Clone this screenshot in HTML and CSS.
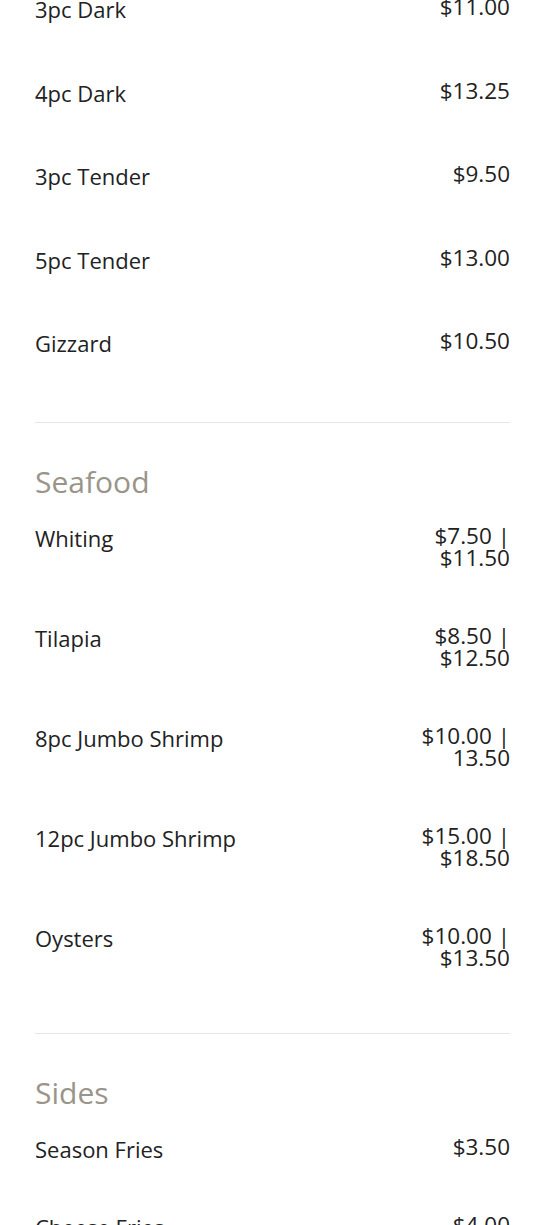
FILE: index.html
```html
<!DOCTYPE html>
<html lang="en">
    <head>
        <meta charset="UTF-8">
        <meta name="viewport" content="width=device-width, initial-scale=1.0">
        <title>Menu</title>
        <link rel="stylesheet" href="styles.css">
    </head>
    <body>
        <div class="menu">
            <section class="menu-section">
                <ul class="items">
                    <li class="item"><span class="name">3pc Dark</span><span class="price">$11.00</span></li>
                    <li class="item"><span class="name">4pc Dark</span><span class="price">$13.25</span></li>
                    <li class="item"><span class="name">3pc Tender</span><span class="price">$9.50</span></li>
                    <li class="item"><span class="name">5pc Tender</span><span class="price">$13.00</span></li>
                    <li class="item"><span class="name">Gizzard</span><span class="price">$10.50</span></li>
                </ul>
            </section>

            <section class="menu-section">
                <h2 class="section-title">Seafood</h2>
                <ul class="items">
                    <li class="item"><span class="name">Whiting</span><span class="price">$7.50 | $11.50</span></li>
                    <li class="item"><span class="name">Tilapia</span><span class="price">$8.50 | $12.50</span></li>
                    <li class="item"><span class="name">8pc Jumbo Shrimp</span><span class="price">$10.00 | 13.50</span></li>
                    <li class="item"><span class="name">12pc Jumbo Shrimp</span><span class="price">$15.00 | $18.50</span></li>
                    <li class="item"><span class="name">Oysters</span><span class="price">$10.00 | $13.50</span></li>
                </ul>
            </section>

            <section class="menu-section">
                <h2 class="section-title">Sides</h2>
                <ul class="items items-tight">
                    <li class="item"><span class="name">Season Fries</span><span class="price">$3.50</span></li>
                    <li class="item"><span class="name">Cheese Fries</span><span class="price">$4.00</span></li>
                </ul>
            </section>
        </div>
    </body>
</html>
```

FILE: styles.css
```css
body {
    font-family: 'Open Sans', 'Liberation Sans', Arial, sans-serif;
    background-color: #fff;
    color: #222;
    margin: 0;
}
.menu {
    padding: 0 35px;
    margin-top: -4px;
}
.menu-section {
    padding-bottom: 64px;
    border-bottom: 1px solid #e6e6e6;
}
.menu-section + .menu-section {
    padding-top: 41px;
}
.section-title {
    margin: 0 0 25px;
    font-size: 30px;
    font-weight: 400;
    line-height: 36px;
    color: #9a948a;
}
.items {
    list-style: none;
    margin: 0;
    padding: 0;
    display: flex;
    flex-direction: column;
    gap: 56px;
}
.items-tight {
    gap: 51px;
}
.item {
    display: flex;
    justify-content: space-between;
    align-items: flex-start;
    gap: 20px;
}
.name {
    font-size: 22px;
    line-height: 27.5px;
}
.price {
    font-size: 22.5px;
    line-height: 22px;
    max-width: 100px;
    text-align: right;
}
```
